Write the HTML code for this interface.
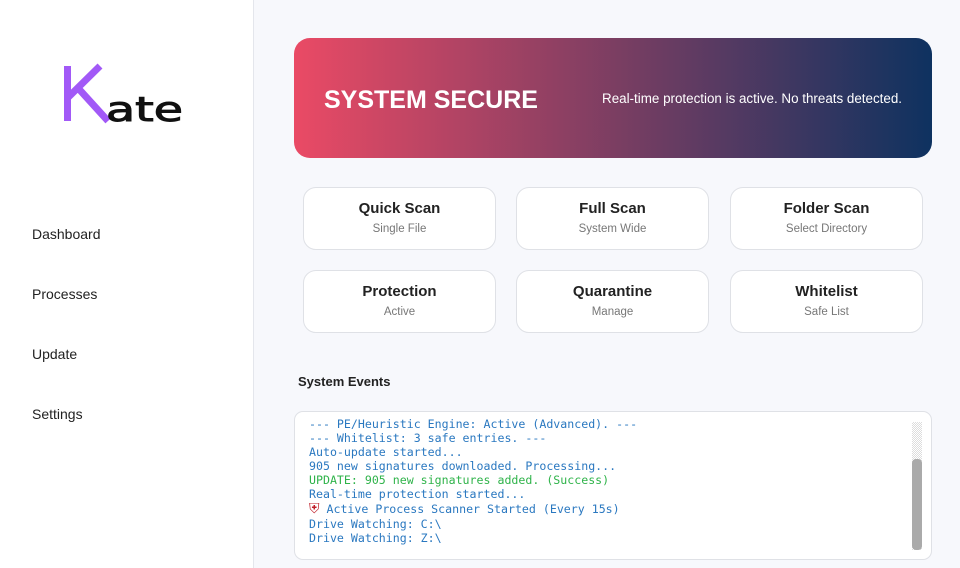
<!DOCTYPE html>
<html><head><style>
*{margin:0;padding:0;box-sizing:border-box}
body{width:960px;height:568px;overflow:hidden;background:#f7f8fc;font-family:"Liberation Sans",sans-serif;position:relative}
.side{position:absolute;left:0;top:0;width:254px;height:568px;background:#fff;border-right:1px solid #e4e6ec}
.logo{position:absolute;left:60px;top:60px}
.nav{position:absolute;left:32px;font-size:14px;color:#222}
.banner{position:absolute;left:294px;top:38px;width:638px;height:120px;border-radius:16px;background:linear-gradient(90deg,#ea4a65,#0e3260)}
.banner h1{position:absolute;left:30px;top:48px;font-size:25px;color:#fff;font-weight:bold}
.banner p{position:absolute;right:30px;top:53px;font-size:13.4px;color:#fff}
.card{position:absolute;width:193px;height:63px;background:#fff;border:1px solid #dfe1e6;border-radius:13px;text-align:center}
.card b{display:block;margin-top:12px;font-size:15px;color:#222}
.card span{display:block;margin-top:6px;font-size:11.5px;color:#777}
.ev{position:absolute;left:298px;top:374px;font-size:13px;font-weight:bold;color:#222}
.log{position:absolute;left:294px;top:411px;width:638px;height:149px;background:#fff;border:1px solid #dfe1e6;border-radius:9px;overflow:hidden}
.lines{position:absolute;left:14px;top:5px;font-family:"DejaVu Sans Mono","Liberation Mono",monospace;font-size:11.6px;line-height:14px;color:#2a78c0;white-space:pre}
.sb{position:absolute;left:617px;top:10px;width:10px;height:128px;background:repeating-conic-gradient(#ddd 0 25%,#fff 0 50%) 0 0/2px 2px}
.th{position:absolute;left:617px;top:47px;width:10px;height:91px;background:#aaa;border-radius:4px}
</style></head><body>
<div class="side">
<svg class="logo" width="140" height="70" viewBox="0 0 140 70">
<path d="M7.5 6V61M7.5 38L40 6M18 28L48 61" stroke="#a259f7" stroke-width="7" fill="none"/>
<text x="46" y="61" font-family="DejaVu Sans" font-size="34" fill="#111" stroke="#111" stroke-width="1" textLength="77" lengthAdjust="spacingAndGlyphs">ate</text>
</svg>
<div class="nav" style="top:226px">Dashboard</div>
<div class="nav" style="top:286px">Processes</div>
<div class="nav" style="top:346px">Update</div>
<div class="nav" style="top:406px">Settings</div>
</div>
<div class="banner"><h1>SYSTEM SECURE</h1><p>Real-time protection is active. No threats detected.</p></div>
<div class="card" style="left:303px;top:187px"><b>Quick Scan</b><span>Single File</span></div>
<div class="card" style="left:516px;top:187px"><b>Full Scan</b><span>System Wide</span></div>
<div class="card" style="left:730px;top:187px"><b>Folder Scan</b><span>Select Directory</span></div>
<div class="card" style="left:303px;top:270px"><b>Protection</b><span>Active</span></div>
<div class="card" style="left:516px;top:270px"><b>Quarantine</b><span>Manage</span></div>
<div class="card" style="left:730px;top:270px"><b>Whitelist</b><span>Safe List</span></div>
<div class="ev">System Events</div>
<div class="log">
<div class="lines">--- PE/Heuristic Engine: Active (Advanced). ---
--- Whitelist: 3 safe entries. ---
Auto-update started...
905 new signatures downloaded. Processing...
<span style="color:#2fb34a">UPDATE: 905 new signatures added. (Success)</span>
Real-time protection started...
<span style="line-height:16px"><span style="color:#c0202a;font-size:14px">&#9960;</span> Active Process Scanner Started (Every 15s)</span>
Drive Watching: C:\
Drive Watching: Z:\</div>
<div class="sb"></div><div class="th"></div>
</div>
</body></html>
